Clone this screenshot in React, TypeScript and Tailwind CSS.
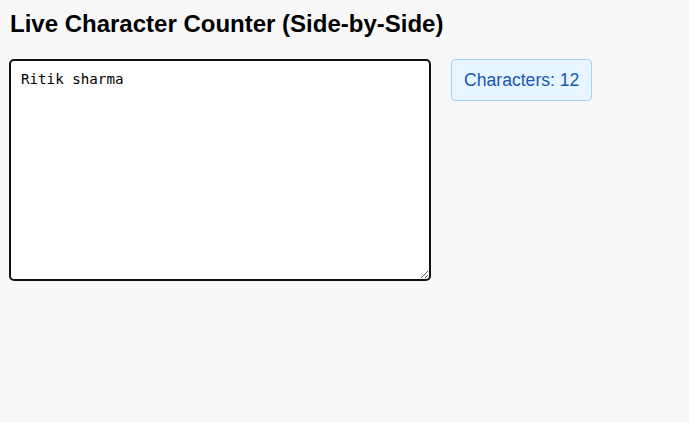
import React, { useState } from "react";

export default function App() {
  const [text, setText] = useState("Ritik sharma");
  return (
    <div className="min-h-[422px] bg-[#f8f8f8] p-[10px] font-['Liberation_Sans',Arial,sans-serif]">
      <h2 className="text-[24px] leading-[28px] font-bold text-black mb-[21px]">
        Live Character Counter (Side-by-Side)
      </h2>
      <div className="flex items-start gap-[20px] -ml-[1px]">
        <textarea
          value={text}
          onChange={(e) => setText(e.target.value)}
          className="box-border w-[422px] h-[222px] border-2 border-[#111] rounded-[5px] bg-white pl-[10px] pr-[9px] pt-[10px] pb-[8px] font-['DejaVu_Sans_Mono',monospace] text-[14.2px] leading-[17px] text-black outline-none resize"
        />
        <div className="box-border h-[42px] px-[12px] flex items-center rounded-[4px] border border-[#9fd4f5] bg-[#e6f5ff] text-[#1a56b0] text-[17.6px]">
          Characters: {text.length}
        </div>
      </div>
    </div>
  );
}
